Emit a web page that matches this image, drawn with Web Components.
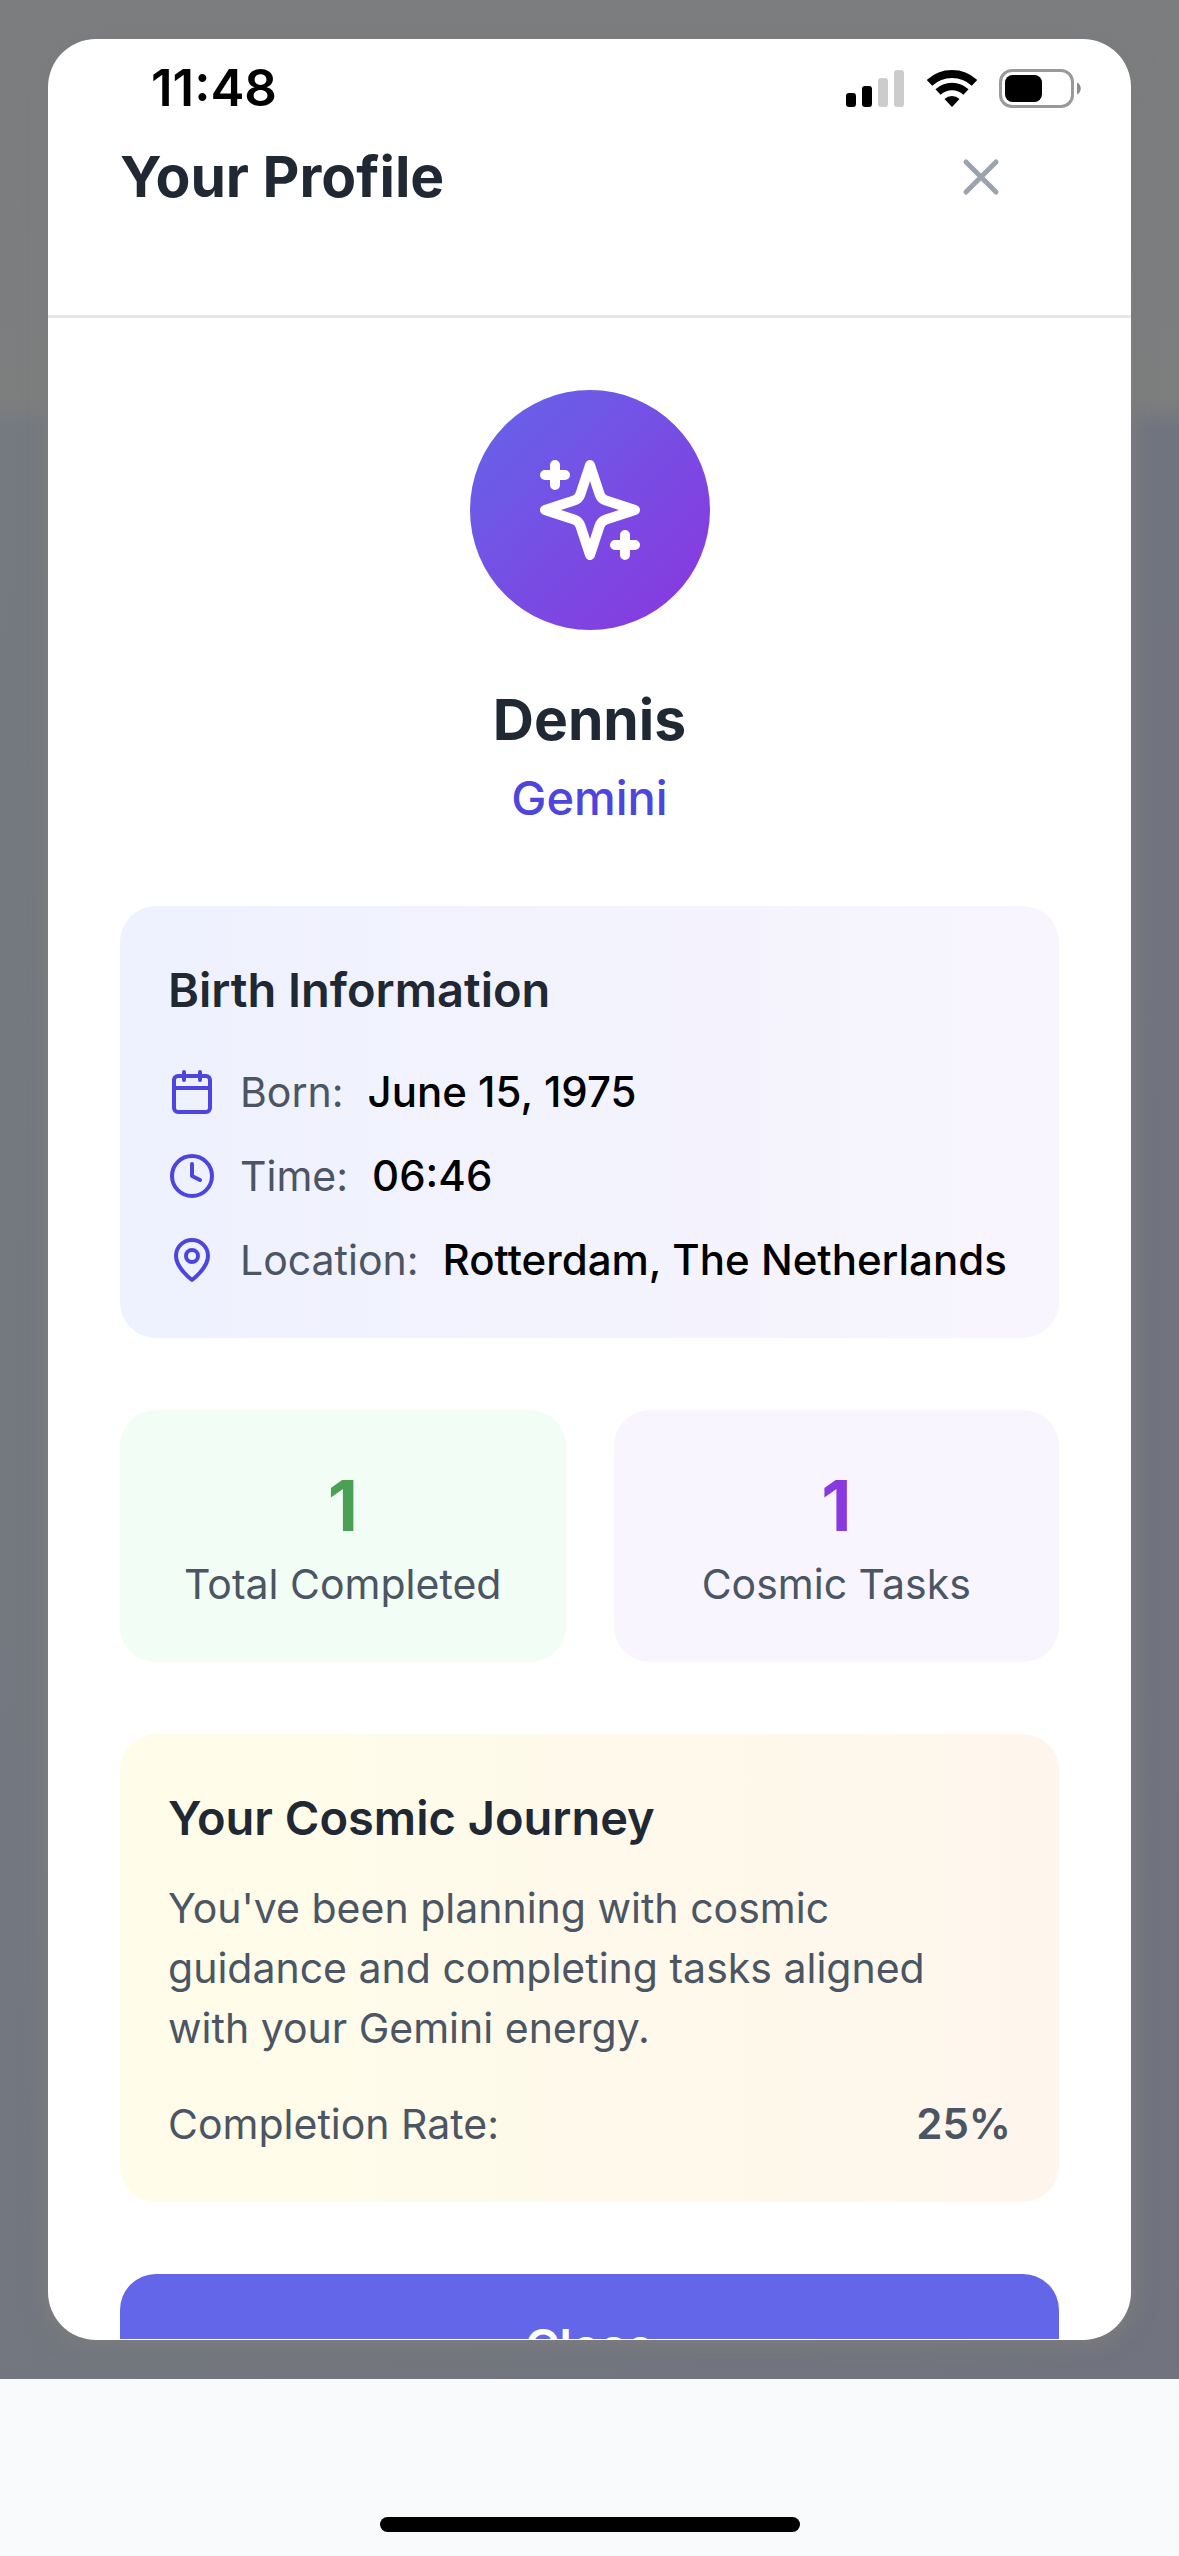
<!DOCTYPE html>
<html lang="en">
<head>
<meta charset="utf-8">
<meta name="viewport" content="width=device-width, initial-scale=1">
<title>Your Profile</title>
<style>
  html, body { margin: 0; height: 100%; }
  body {
    font-family: Inter, "Liberation Sans", sans-serif;
    color: #1f2833;
    background: #f9fafc;
    -webkit-font-smoothing: antialiased;
  }
</style>
</head>
<body>
<app-screen>
  <status-bar slot="status" time="11:48"></status-bar>
  <profile-dialog heading="Your Profile">
    <profile-hero name="Dennis" sign="Gemini"></profile-hero>
    <info-card heading="Birth Information" tone="indigo">
      <info-row icon="calendar" label="Born:">June 15, 1975</info-row>
      <info-row icon="clock" label="Time:">06:46</info-row>
      <info-row icon="pin" label="Location:">Rotterdam, The Netherlands</info-row>
    </info-card>
    <stat-grid>
      <stat-tile tone="green" label="Total Completed">1</stat-tile>
      <stat-tile tone="purple" label="Cosmic Tasks">1</stat-tile>
    </stat-grid>
    <info-card heading="Your Cosmic Journey" tone="amber">
      <journey-summary rate="25%">You've been planning with cosmic guidance and completing tasks aligned with your Gemini energy.</journey-summary>
    </info-card>
    <primary-button>Close</primary-button>
  </profile-dialog>
  <home-indicator slot="footer"></home-indicator>
</app-screen>

<script>
  const define = (tag, render) => customElements.define(tag, class extends HTMLElement {
    connectedCallback() {
      if (this.shadowRoot) return;
      const template = document.createElement('template');
      template.innerHTML = render(this);
      this.attachShadow({ mode: 'open' }).append(template.content.cloneNode(true));
    }
  });
  const attr = (el, name) => el.getAttribute(name) || '';

  const ICONS = {
    sparkles: '<path d="m12 3-1.912 5.813a2 2 0 0 1-1.275 1.275L3 12l5.813 1.912a2 2 0 0 1 1.275 1.275L12 21l1.912-5.813a2 2 0 0 1 1.275-1.275L21 12l-5.813-1.912a2 2 0 0 1-1.275-1.275L12 3Z"/><path d="M5 3v4M19 17v4M3 5h4M17 19h4"/>',
    calendar: '<rect x="3" y="4" width="18" height="18" rx="2"/><path d="M16 2v4M8 2v4M3 10h18"/>',
    clock: '<circle cx="12" cy="12" r="10"/><path d="M12 6v6l4 2"/>',
    pin: '<path d="M20 10c0 6-8 12-8 12s-8-6-8-12a8 8 0 0 1 16 0Z"/><circle cx="12" cy="10" r="3"/>',
    close: '<path d="M18 6 6 18M6 6l12 12"/>'
  };

  define('line-icon', el => `
    <style>
      :host { display: block; flex: none; }
      svg { display: block; width: 100%; height: 100%; }
    </style>
    <svg viewBox="0 0 24 24" fill="none" stroke="currentColor" stroke-width="2" stroke-linecap="round" stroke-linejoin="round" aria-hidden="true">${ICONS[attr(el, 'name')]}</svg>`);

  define('status-bar', el => `
    <style>
      :host { display: flex; justify-content: space-between; align-items: center; height: 60px; padding: 0 98px 0 151px; color: #000; }
      time { font-size: 51px; line-height: 60px; font-weight: 600; }
      .icons { display: flex; align-items: center; gap: 22px; }
      svg { display: block; }
    </style>
    <time>${attr(el, 'time')}</time>
    <div class="icons">
      <svg width="59" height="37" viewBox="0 0 59 37" aria-label="Signal">
        <rect y="23" width="10" height="14" rx="3"/>
        <rect x="16" y="16" width="10" height="21" rx="3"/>
        <rect x="32" y="8" width="10" height="29" rx="3" fill="#ccc"/>
        <rect x="48" width="10" height="37" rx="3" fill="#ccc"/>
      </svg>
      <svg width="50" height="37" viewBox="0 0 50 37" fill="none" stroke="#000" aria-label="Wi-Fi">
        <path stroke-width="8" d="M2.5 12.9A33 33 0 0 1 47.5 12.9"/>
        <path stroke-width="7.5" d="M11 22A20.5 20.5 0 0 1 39 22"/>
        <path stroke="none" fill="#000" d="M25 37 17.5 29A11 11 0 0 1 32.5 29Z"/>
      </svg>
      <svg width="82" height="39" viewBox="0 0 82 39" aria-label="Battery">
        <rect x="1.5" y="1.5" width="72" height="36" rx="11.5" fill="none" stroke="#999" stroke-width="3"/>
        <rect x="6" y="6" width="37" height="27" rx="7.5"/>
        <path d="M78 13.5c5 2 5 10 0 12z" fill="#8c8c8c"/>
      </svg>
    </div>`);

  define('home-indicator', () => `
    <style>
      :host { display: flex; align-items: flex-end; justify-content: center; height: 153px; padding-bottom: 24px; }
      div { width: 420px; height: 15px; border-radius: 8px; background: #000; }
    </style>
    <div></div>`);

  define('app-screen', () => `
    <style>
      :host { display: flex; flex-direction: column; height: 100vh; overflow: hidden; position: relative; }
      main {
        flex: 1; min-height: 0; display: flex; box-sizing: border-box; padding: 39px 48px;
        background:
          linear-gradient(180deg, #7c7d7e 0, #7d7e7e 400px, #7d7e7e00 430px),
          linear-gradient(180deg, #74787800, #71727e66),
          linear-gradient(90deg, #757a80, #70747e);
      }
      .status { position: absolute; inset: 58px 0 auto 0; z-index: 1; }
    </style>
    <div class="status"><slot name="status"></slot></div>
    <main><slot></slot></main>
    <slot name="footer"></slot>`);

  define('profile-dialog', el => `
    <style>
      :host { display: flex; flex: 1; min-width: 0; }
      section {
        flex: 1; min-width: 0; display: flex; flex-direction: column; box-sizing: border-box;
        padding-bottom: 1px; overflow: hidden; border-radius: 48px; background: #fff;
        box-shadow: 0 0 18px 6px #7b7c7d;
      }
      header {
        flex: none; display: flex; align-items: center; justify-content: space-between;
        padding: 72px; border-bottom: 3px solid #e5e7eb;
      }
      h2 { margin: 0; font-size: 57px; line-height: 84px; font-weight: 700; }
      button { display: block; margin: 0; border: 0; padding: 36px 48px; background: none; color: #9ca3af; }
      line-icon { width: 60px; height: 60px; }
      .body {
        flex: 1; min-height: 0; overflow: hidden; display: flex; flex-direction: column;
        gap: 72px; padding: 72px 72px 0;
      }
      ::slotted(*) { flex: none; }
    </style>
    <section role="dialog" aria-labelledby="title">
      <header>
        <h2 id="title">${attr(el, 'heading')}</h2>
        <button type="button" aria-label="Close profile"><line-icon name="close"></line-icon></button>
      </header>
      <div class="body"><slot></slot></div>
    </section>`);

  define('profile-hero', el => `
    <style>
      :host { display: flex; flex-direction: column; align-items: center; text-align: center; }
      .avatar {
        display: flex; align-items: center; justify-content: center; width: 240px; height: 240px;
        margin-bottom: 48px; border-radius: 50%; color: #fff;
        background: linear-gradient(135deg, #6366ea, #8b35de);
      }
      line-icon { width: 120px; height: 120px; }
      h3 { margin: 0; font-size: 57px; line-height: 84px; font-weight: 700; }
      p { margin: 0; font-size: 47px; line-height: 72px; font-weight: 500; color: #4d45dd; }
    </style>
    <div class="avatar"><line-icon name="sparkles"></line-icon></div>
    <h3>${attr(el, 'name')}</h3>
    <p>${attr(el, 'sign')}</p>`);

  define('info-card', el => `
    <style>
      :host { display: block; padding: 48px; border-radius: 36px; }
      :host([tone="indigo"]) { --gap: 36px; background: linear-gradient(90deg, #eef1fe, #f8f5fd); }
      :host([tone="amber"]) { --gap: 24px; background: linear-gradient(90deg, #fefde9, #fef6ed); }
      h4 { margin: 0 0 var(--gap); font-size: 47px; line-height: 72px; font-weight: 600; }
      .content { display: flex; flex-direction: column; gap: 24px; }
    </style>
    <h4>${attr(el, 'heading')}</h4>
    <div class="content"><slot></slot></div>`);

  define('info-row', el => `
    <style>
      :host { display: flex; align-items: center; gap: 24px; font-size: 41px; line-height: 60px; white-space: nowrap; }
      line-icon { width: 48px; height: 48px; color: #4d45dd; }
      .label { color: #4b5563; }
      .value { color: #000; font-size: 42px; font-weight: 500; }
    </style>
    <line-icon name="${attr(el, 'icon')}"></line-icon>
    <span class="label">${attr(el, 'label')}</span>
    <span class="value"><slot></slot></span>`);

  define('stat-grid', () => `
    <style>
      :host { display: grid; grid-template-columns: repeat(2, minmax(0, 1fr)); gap: 48px; }
    </style>
    <slot></slot>`);

  define('stat-tile', el => `
    <style>
      :host { display: block; padding: 48px; border-radius: 36px; text-align: center; }
      :host([tone="green"]) { background: #f2fdf5; --accent: #4aa156; }
      :host([tone="purple"]) { background: #f8f5fe; --accent: #8a38e0; }
      .number { font-size: 70px; line-height: 96px; font-weight: 700; color: var(--accent); }
      .label { font-size: 41px; line-height: 60px; color: #4b5563; white-space: nowrap; }
    </style>
    <div class="number"><slot></slot></div>
    <div class="label">${attr(el, 'label')}</div>`);

  define('journey-summary', el => `
    <style>
      :host { display: flex; flex-direction: column; gap: 36px; font-size: 41px; line-height: 60px; color: #4b5563; }
      p { margin: 0; }
      .rate { display: flex; justify-content: space-between; }
      strong { font-size: 42px; font-weight: 600; }
    </style>
    <p><slot></slot></p>
    <div class="rate"><span>Completion Rate:</span><strong>${attr(el, 'rate')}</strong></div>`);

  define('primary-button', () => `
    <style>
      :host { display: block; }
      button {
        display: block; width: 100%; margin: 0; border: 0; padding: 36px; border-radius: 36px;
        background: #6366e8; color: #fff; font-family: inherit; font-size: 47px; line-height: 72px; font-weight: 600;
      }
    </style>
    <button type="button"><slot></slot></button>`);
</script>
</body>
</html>
